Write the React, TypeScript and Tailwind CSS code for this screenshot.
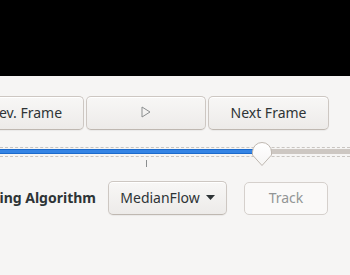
import React from "react";

const btn =
  "flex items-center justify-center h-[34px] pb-[2px] rounded-[5px] border border-[#cdc7c2] border-b-[#bfb8b1] bg-gradient-to-b from-[#f8f7f6] to-[#edebe9] shadow-[inset_0_1px_#ffffff,0_1px_1px_rgba(0,0,0,0.05)] text-[#2e3436] text-[14px] whitespace-nowrap";

const Knob = () => (
  <svg width="22" height="26" viewBox="0 0 22 26" className="absolute left-[251px] top-[141px]">
    <defs>
      <linearGradient id="kg" x1="0" y1="0" x2="0" y2="1">
        <stop offset="0" stopColor="#ffffff" />
        <stop offset="1" stopColor="#f6f5f4" />
      </linearGradient>
    </defs>
    <path
      d="M11 1.5 A9.5 9.5 0 0 1 20.5 11 V14 L11 24.5 L1.5 14 V11 A9.5 9.5 0 0 1 11 1.5 Z"
      fill="url(#kg)"
      stroke="#bfb8b1"
      strokeWidth="1"
    />
  </svg>
);

const App = () => {
  return (
    <div
      className="relative w-[350px] h-[275px] overflow-hidden bg-[#f6f5f4]"
      style={{ fontFamily: '"Noto Sans", "Open Sans", sans-serif' }}
    >
      <div className="h-[76px] bg-black" />

      <div className="flex gap-[2px] mt-[20px] ml-[-37px]">
        <div className={`${btn} w-[121px]`}>Prev. Frame</div>
        <div className={`${btn} w-[120px]`}>
          <svg width="10" height="12" viewBox="0 0 10 12">
            <path d="M1 1 L9 6 L1 11 Z" fill="none" stroke="#8b8e8f" strokeWidth="1" />
          </svg>
        </div>
        <div className={`${btn} w-[121px]`}>Next Frame</div>
      </div>

      <div className="mt-[17px] h-[10px] border-y border-dashed border-[#c9c5c1] pt-px">
        <div className="flex h-[5px]">
          <div className="w-[262px] h-full bg-[#3584e4] border-y border-[#1b6acb]" />
          <div className="flex-1 h-full bg-[#cdc7c2]" />
        </div>
      </div>
      <div className="ml-[146px] mt-[3px] w-px h-[7px] bg-[#8b8e8f]" />

      <div className="flex items-center mt-[14px]">
        <div className="flex justify-end w-[96px] pb-[2px]">
          <span className="whitespace-nowrap font-bold text-[14px] text-[#2e3436]">
            Tracking Algorithm
          </span>
        </div>
        <div className={`${btn} ml-[12px] w-[119px] h-[33px] gap-[6px]`}>
          <span>MedianFlow</span>
          <svg width="9" height="5" viewBox="0 0 9 5">
            <path d="M0 0 H9 L4.5 5 Z" fill="#2e3436" />
          </svg>
        </div>
        <div className="ml-[17px] w-[84px] h-[33px] pb-[2px] flex items-center justify-center rounded-[5px] border border-[#d5d0cc] bg-[#faf9f8] text-[14px] text-[#929595]">
          Track
        </div>
      </div>

      <Knob />
    </div>
  );
};

export default App;
